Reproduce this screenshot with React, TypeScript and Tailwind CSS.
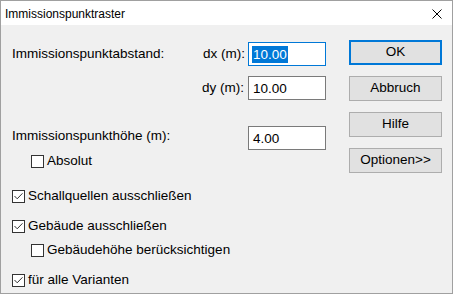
import React from 'react';

const font = { fontFamily: '"Liberation Sans", Arial, sans-serif' };

function Check({ checked }: { checked?: boolean }) {
  return (
    <span className="w-[13px] h-[13px] border border-[#333333] bg-white flex items-center justify-center shrink-0">
      {checked && (
        <svg width="11" height="11" viewBox="0 0 11 11">
          <path d="M1.5 5 L4.2 7.8 L9.5 2.3" fill="none" stroke="#333333" strokeWidth="1" />
        </svg>
      )}
    </span>
  );
}

function CheckRow({ label, checked, indent, className }: { label: string; checked?: boolean; indent?: boolean; className?: string }) {
  return (
    <div className={`flex items-center h-[14px] gap-[3px] ${indent ? 'pl-[19px]' : ''} ${className ?? ''}`}>
      <Check checked={checked} />
      <span className="leading-[14px]">{label}</span>
    </div>
  );
}

function Field({ value, focused }: { value: string; focused?: boolean }) {
  return (
    <div
      className={`w-[78px] h-[24px] bg-white border flex items-center pl-[3px] ${
        focused ? 'border-[#0078d7]' : 'border-[#7a7a7a]'
      }`}
    >
      <span className={`leading-[17px] px-[1px] ${focused ? 'bg-[#0078d7] text-white' : 'text-black'}`}>{value}</span>
    </div>
  );
}

function Button({ label, primary }: { label: string; primary?: boolean }) {
  return (
    <div
      className={`w-[93px] h-[25px] bg-[#e1e1e1] flex items-center justify-center ${
        primary ? 'border-2 border-[#0078d7]' : 'border border-[#adadad]'
      }`}
    >
      {label}
    </div>
  );
}

export default function App() {
  return (
    <div className="w-[455px] h-[296px] bg-white text-[13.5px] text-black" style={font}>
      <div className="w-[453px] h-[294px] border border-[#a0a0a0] bg-[#f0f0f0] flex flex-col">
        <div className="h-[24px] bg-white flex items-center justify-between pl-[4px] pr-[10px] shrink-0">
          <span className="text-[12px] pt-[2px]">Immissionspunktraster</span>
          <svg width="10" height="10" viewBox="0 0 10 10" className="mt-[2px]">
            <path d="M0.5 0.5 L9.5 9.5 M9.5 0.5 L0.5 9.5" stroke="#000" strokeWidth="1" />
          </svg>
        </div>

        <div className="flex flex-1">
          <div className="w-[348px] pl-[11px] pt-[17px] flex flex-col">
            <div className="flex items-center h-[24px]">
              <span className="w-[191px]">Immissionspunktabstand:</span>
              <span className="w-[45px]">dx (m):</span>
              <Field value="10.00" focused />
            </div>
            <div className="flex items-center h-[24px] mt-[10px]">
              <span className="w-[190px]" />
              <span className="w-[46px]">dy (m):</span>
              <Field value="10.00" />
            </div>
            <div className="flex items-center h-[24px] mt-[26px]">
              <span className="w-[236px] -mt-[4px]">Immissionspunkthöhe (m):</span>
              <Field value="4.00" />
            </div>
            <CheckRow label="Absolut" indent className="mt-[4px]" />
            <CheckRow label="Schallquellen ausschließen" checked className="mt-[21px]" />
            <CheckRow label="Gebäude ausschließen" checked className="mt-[16px]" />
            <CheckRow label="Gebäudehöhe berücksichtigen" indent className="mt-[10px]" />
            <CheckRow label="für alle Varianten" checked className="mt-[16px]" />
          </div>

          <div className="pt-[15px] flex flex-col gap-[11px]">
            <Button label="OK" primary />
            <Button label="Abbruch" />
            <Button label="Hilfe" />
            <Button label="Optionen>>" />
          </div>
        </div>
      </div>
    </div>
  );
}
